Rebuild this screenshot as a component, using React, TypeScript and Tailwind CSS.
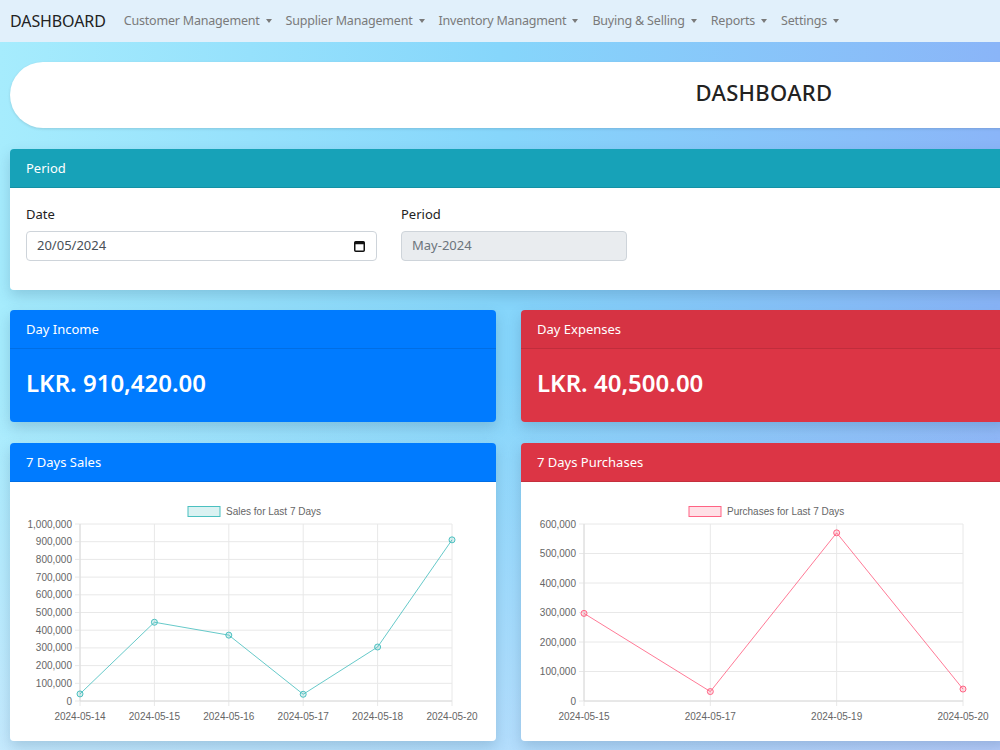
import React from 'react';

type Point = { label: string; value: number };

const salesData: Point[] = [
  { label: '2024-05-14', value: 40000 },
  { label: '2024-05-15', value: 445000 },
  { label: '2024-05-16', value: 372000 },
  { label: '2024-05-17', value: 38000 },
  { label: '2024-05-18', value: 305000 },
  { label: '2024-05-20', value: 910420 },
];

const purchaseData: Point[] = [
  { label: '2024-05-15', value: 297000 },
  { label: '2024-05-17', value: 32000 },
  { label: '2024-05-19', value: 570000 },
  { label: '2024-05-20', value: 40500 },
];

const navItems = [
  'Customer Management',
  'Supplier Management',
  'Inventory Managment',
  'Buying & Selling',
  'Reports',
  'Settings',
];

interface LineChartProps {
  data: Point[];
  max: number;
  step: number;
  left: number;
  legend: string;
  legendX: number;
  stroke: string;
  fill: string;
}

// simple line chart in the style of chart.js defaults
function LineChart({ data, max, step, left, legend, legendX, stroke, fill }: LineChartProps) {
  const right = 442;
  const top = 42;
  const bottom = 219;
  const ticks: number[] = [];
  for (let v = 0; v <= max; v += step) ticks.push(v);
  const xAt = (i: number) => left + (i * (right - left)) / (data.length - 1);
  const yAt = (v: number) => bottom - (v / max) * (bottom - top);
  const line = data.map((d, i) => `${i === 0 ? 'M' : 'L'}${xAt(i)},${yAt(d.value)}`).join(' ');
  const font = '"Liberation Sans", Arial, sans-serif';

  return (
    <svg width="485" height="258" viewBox="0 0 485 258" className="block">
      {/* legend */}
      <rect x={legendX} y={24.5} width={32} height={10} fill={fill} stroke={stroke} strokeWidth={1} />
      <text x={legendX + 38} y={33} fontSize={10} fill="#666" fontFamily={font}>
        {legend}
      </text>

      {/* horizontal grid + y labels */}
      {ticks.map((t) => (
        <g key={t}>
          <line x1={left - 5} x2={right} y1={yAt(t)} y2={yAt(t)} stroke="#e8e8e8" strokeWidth={1} />
          <text x={left - 8} y={yAt(t) + 3.5} fontSize={10} fill="#666" textAnchor="end" fontFamily={font}>
            {t.toLocaleString('en-US')}
          </text>
        </g>
      ))}

      {/* vertical grid + x labels */}
      {data.map((d, i) => (
        <g key={d.label}>
          <line x1={xAt(i)} x2={xAt(i)} y1={top} y2={bottom + 5} stroke="#e8e8e8" strokeWidth={1} />
          <text x={xAt(i)} y={238} fontSize={10} fill="#666" textAnchor="middle" fontFamily={font}>
            {d.label}
          </text>
        </g>
      ))}

      <line x1={left} x2={right} y1={bottom} y2={bottom} stroke="#dcdcdc" strokeWidth={1} />
      <line x1={left} x2={left} y1={top} y2={bottom} stroke="#dcdcdc" strokeWidth={1} />

      <path d={line} fill="none" stroke={stroke} strokeOpacity={0.85} strokeWidth={1} />
      {data.map((d, i) => (
        <circle key={d.label} cx={xAt(i)} cy={yAt(d.value)} r={3} fill={fill} stroke={stroke} strokeWidth={1} />
      ))}
    </svg>
  );
}

function Card({
  title,
  header,
  children,
  bodyClass,
}: {
  title: string;
  header: string;
  children?: React.ReactNode;
  bodyClass: string;
}) {
  return (
    <div className="rounded-[4px] overflow-hidden shadow-[0_6px_14px_rgba(40,80,120,0.22)]">
      <div className={`${header} h-[39px] px-4 pt-[2px] flex items-center text-[13px] text-white border-b border-black/10`}>
        {title}
      </div>
      <div className={bodyClass}>{children}</div>
    </div>
  );
}

export default function App() {
  return (
    <div className="w-[1000px] h-[750px] overflow-hidden relative font-['Noto_Sans',sans-serif] bg-[linear-gradient(90deg,#a6ecfd_0%,#86d6fb_50%,#8ab5f8_100%)]">
      <div className="absolute inset-0 bg-[linear-gradient(180deg,rgba(255,255,255,0)_50%,rgba(236,232,255,0.45)_100%)] pointer-events-none" />
      <div className="w-[1528px] relative">
        {/* top navbar */}
        <nav className="h-[42px] bg-[#e1f0fb] flex items-center px-[10px]">
          <span className="text-[16px] text-[#222] mr-[11px] tracking-[-0.1px]">DASHBOARD</span>
          <div className="flex items-center">
            {navItems.map((item) => (
              <div key={item} className="flex items-center px-[7px] text-[12.5px] tracking-[-0.2px] text-[#7a7a7a]">
                {item}
                <span className="ml-[6px] w-0 h-0 border-t-[4px] border-t-[#7a7a7a] border-x-[3.5px] border-x-transparent" />
              </div>
            ))}
          </div>
        </nav>

        <div className="px-[10px] pt-[20px] pb-6 flex flex-col">
          {/* page title */}
          <div className="h-[66px] rounded-full bg-white flex items-center justify-center pb-[6px] shadow-[0_1px_3px_rgba(0,0,0,0.12)]">
            <h1 className="text-[22px] font-medium text-[#222] tracking-[0.3px]">DASHBOARD</h1>
          </div>

          {/* period selector */}
          <div className="mt-[21px]">
            <Card title="Period" header="bg-[#17a2b8]" bodyClass="bg-white px-4 pt-[17px] pb-[29px]">
              <div className="flex gap-[24px]">
                <div className="w-[351px]">
                  <label className="block text-[13px] text-[#222] mb-[6px]">Date</label>
                  <div className="h-[30px] rounded-[4px] border border-[#ced4da] bg-white flex items-center justify-between pl-[10px] pr-[11px] text-[13px] text-[#495057]">
                    <span>20/05/2024</span>
                    <svg width="11" height="12" viewBox="0 0 11 12">
                      <rect x="0.75" y="1.75" width="9.5" height="9.5" rx="1" fill="none" stroke="#111" strokeWidth="1.5" />
                      <rect x="0.75" y="1.75" width="9.5" height="2.5" fill="#111" />
                    </svg>
                  </div>
                </div>
                <div className="w-[226px]">
                  <label className="block text-[13px] text-[#222] mb-[6px]">Period</label>
                  <div className="h-[30px] rounded-[4px] border border-[#ced4da] bg-[#e9ecef] flex items-center pl-[10px] text-[13px] text-[#6c757d]">
                    May-2024
                  </div>
                </div>
              </div>
            </Card>
          </div>

          {/* daily totals */}
          <div className="mt-[20px] grid grid-cols-3 gap-x-[25px]">
            <Card title="Day Income" header="bg-[#007bff]" bodyClass="bg-[#007bff] h-[73px] px-4 pb-[4px] flex items-center">
              <span className="text-[24px] font-semibold text-white">LKR. 910,420.00</span>
            </Card>
            <Card title="Day Expenses" header="bg-[#d63343]" bodyClass="bg-[#dc3545] h-[73px] px-4 pb-[4px] flex items-center">
              <span className="text-[24px] font-semibold text-white">LKR. 40,500.00</span>
            </Card>
            <div />
          </div>

          {/* weekly charts */}
          <div className="mt-[21px] grid grid-cols-3 gap-x-[25px]">
            <Card title="7 Days Sales" header="bg-[#007bff]" bodyClass="bg-white h-[259px]">
              <LineChart
                data={salesData}
                max={1000000}
                step={100000}
                left={70}
                legend="Sales for Last 7 Days"
                legendX={178}
                stroke="rgb(75,192,192)"
                fill="rgba(75,192,192,0.2)"
              />
            </Card>
            <Card title="7 Days Purchases" header="bg-[#dc3545]" bodyClass="bg-white h-[259px]">
              <LineChart
                data={purchaseData}
                max={600000}
                step={100000}
                left={63}
                legend="Purchases for Last 7 Days"
                legendX={168}
                stroke="rgb(255,99,132)"
                fill="rgba(255,99,132,0.2)"
              />
            </Card>
            <div />
          </div>
        </div>
      </div>
    </div>
  );
}
